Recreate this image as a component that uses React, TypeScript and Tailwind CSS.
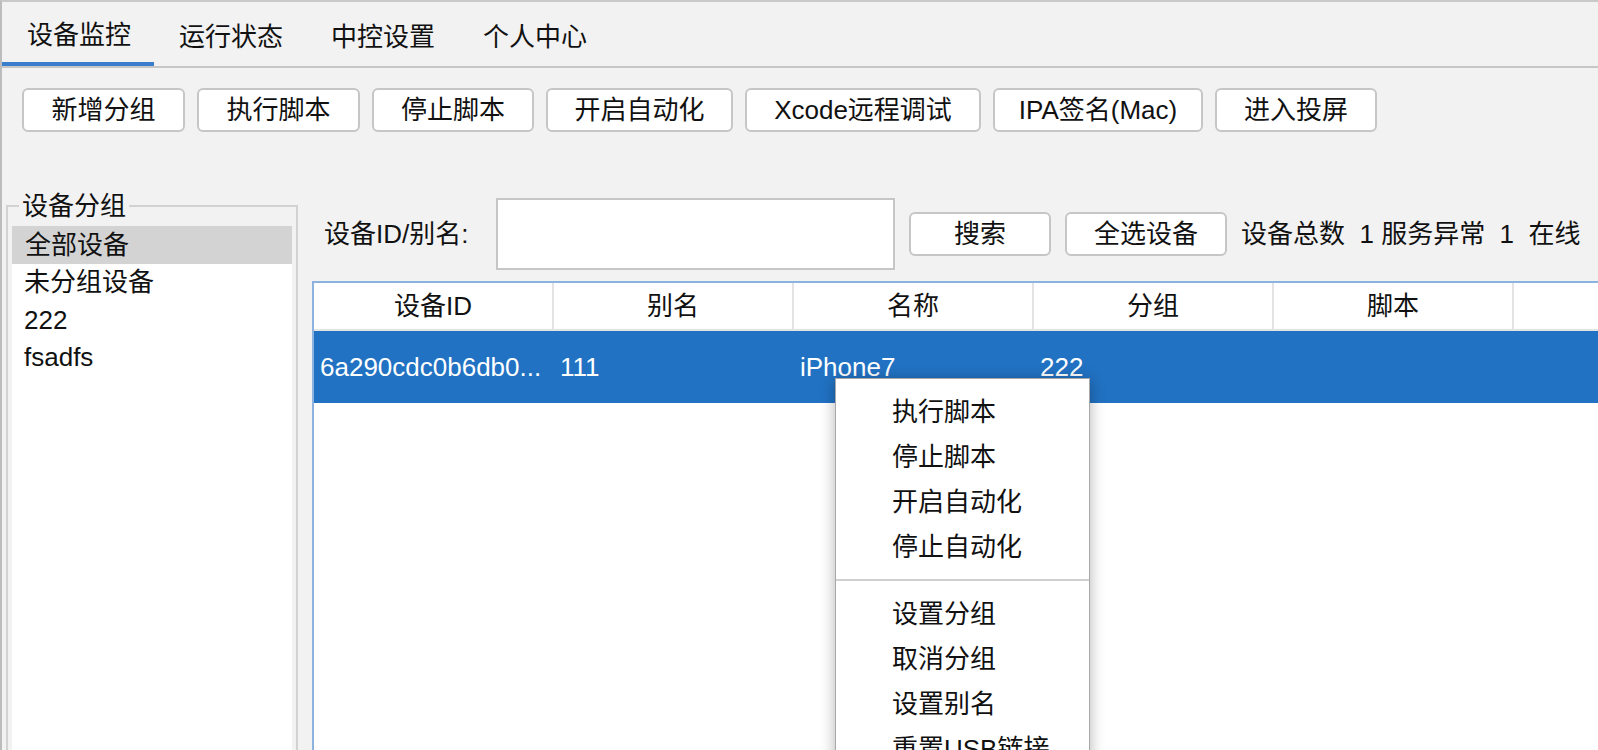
import React from "react";

const tabs = ["设备监控", "运行状态", "中控设置", "个人中心"];
const tools: { label: string; w: string }[] = [
  { label: "新增分组", w: "w-[163px]" },
  { label: "执行脚本", w: "w-[163px]" },
  { label: "停止脚本", w: "w-[162px]" },
  { label: "开启自动化", w: "w-[187px]" },
  { label: "Xcode远程调试", w: "w-[236px]" },
  { label: "IPA签名(Mac)", w: "w-[210px]" },
  { label: "进入投屏", w: "w-[162px]" },
];
const groups = ["全部设备", "未分组设备", "222", "fsadfs"];
const headers = ["设备ID", "别名", "名称", "分组", "脚本", ""];
const row = ["6a290cdc0b6db0...", "111", "iPhone7", "222", "", ""];
const menu1 = ["执行脚本", "停止脚本", "开启自动化", "停止自动化"];
const menu2 = ["设置分组", "取消分组", "设置别名", "重置USB链接"];

export default function App() {
  return (
    <div className="relative h-[750px] w-[1598px] overflow-hidden bg-[#f2f2f2] border-t-2 border-l-2 border-t-[#c9c9c9] border-l-[#bcbcbc] text-[26px] text-[#111] font-['Liberation_Sans','Noto_Sans_CJK_SC',sans-serif] flex flex-col">
      {/* Tabs */}
      <div className="flex h-[66px] border-b-2 border-[#c6c6c6] shrink-0">
        {tabs.map((t, i) => (
          <div
            key={t}
            className={
              i === 0
                ? "w-[152px] h-[64px] pl-[25px] pt-[5px] flex items-center border-b-4 border-[#3a7dcd] leading-none"
                : "w-[152px] h-[64px] pl-[25px] pt-[5px] flex items-center leading-none"
            }
          >
            {t}
          </div>
        ))}
      </div>

      {/* Toolbar */}
      <div className="flex gap-[12px] pl-[20px] pt-[20px] shrink-0">
        {tools.map((b) => (
          <div
            key={b.label}
            className={`${b.w} h-[44px] flex items-center justify-center bg-white border-2 border-[#c6c6c6] rounded-[6px] leading-none`}
          >
            {b.label}
          </div>
        ))}
      </div>

      {/* Main */}
      <div className="flex items-start mt-[59px] pl-[4px]">
        {/* Left group panel */}
        <fieldset className="w-[292px] h-[620px] border-2 border-[#d2d2d2] px-[4px] pt-[5px] shrink-0">
          <legend className="ml-[7px] px-[3px] leading-[30px]">设备分组</legend>
          <div className="bg-white h-[600px]">
            {groups.map((g, i) => (
              <div
                key={g}
                className={
                  i === 0
                    ? "h-[37.5px] pl-[13px] flex items-center bg-[#d3d3d3] leading-none"
                    : "h-[37.5px] pl-[12px] flex items-center leading-none"
                }
              >
                {g}
              </div>
            ))}
          </div>
        </fieldset>

        {/* Right */}
        <div className="ml-[14px] pt-[7px] flex-1 min-w-0">
          <div className="flex items-center h-[72px]">
            <span className="w-[184px] shrink-0 pl-[12px] whitespace-nowrap leading-none">设备ID/别名:</span>
            <div className="w-[399px] shrink-0 h-[72px] bg-white border-2 border-[#c6c6c6]" />
            <div className="ml-[14px] shrink-0 w-[142px] h-[44px] flex items-center justify-center bg-white border-2 border-[#c6c6c6] rounded-[6px] leading-none">
              搜索
            </div>
            <div className="ml-[14px] shrink-0 w-[162px] h-[44px] flex items-center justify-center bg-white border-2 border-[#c6c6c6] rounded-[6px] leading-none">
              全选设备
            </div>
            <span className="ml-[14px] whitespace-pre leading-none">设备总数  1 服务异常  1  在线</span>
          </div>

          {/* Table */}
          <div className="mt-[11px] h-[520px] bg-white border-t-2 border-l-2 border-[#8cb3e0]">
            <div className="flex h-[48px] border-b-2 border-[#e3e3e3]">
              {headers.map((h, i) => (
                <div
                  key={i}
                  className="w-[240px] shrink-0 border-r-2 border-[#e3e3e3] flex items-center justify-center leading-none"
                >
                  {h}
                </div>
              ))}
            </div>
            <div className="flex h-[72px] bg-[#2172c3] text-white">
              {row.map((c, i) => (
                <div
                  key={i}
                  className="w-[240px] shrink-0 pl-[6px] flex items-center whitespace-nowrap overflow-hidden leading-none"
                >
                  {c}
                </div>
              ))}
            </div>
          </div>
        </div>
      </div>

      {/* Context menu */}
      <div className="absolute left-[833px] top-[376px] w-[255px] h-[420px] bg-white border border-[#a8a8a8] shadow-[0_2px_14px_rgba(0,0,0,0.3)] pt-[10px]">
        {menu1.map((m) => (
          <div key={m} className="h-[45px] pl-[56px] flex items-center leading-none">
            {m}
          </div>
        ))}
        <div className="h-[22px] flex items-center">
          <div className="w-full h-[2px] bg-[#d0d0d0]" />
        </div>
        {menu2.map((m) => (
          <div key={m} className="h-[45px] pl-[56px] flex items-center leading-none">
            {m}
          </div>
        ))}
      </div>
    </div>
  );
}
